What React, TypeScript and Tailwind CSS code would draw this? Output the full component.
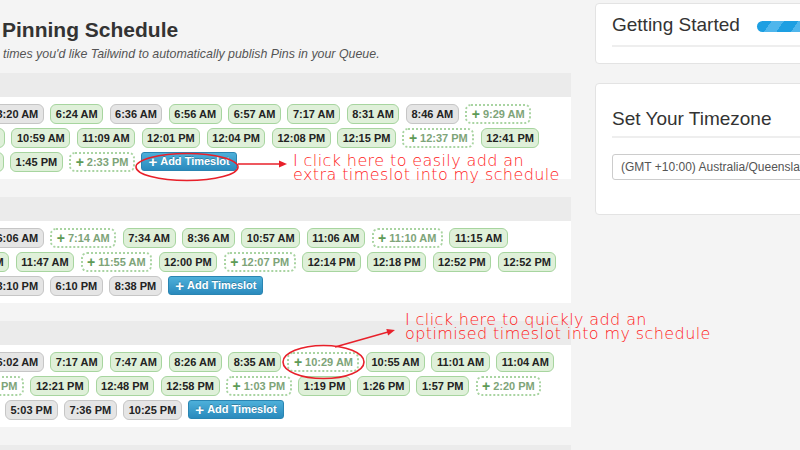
type Kind = "g" | "s" | "d" | "add";
type Row = { lead: string; slots: [string, Kind][] };

const sections: Row[][] = [
  [
    {
      lead: "-ml-[9px]",
      slots: [
        ["3:20 AM", "s"], ["6:24 AM", "g"], ["6:36 AM", "s"], ["6:56 AM", "g"], ["6:57 AM", "g"],
        ["7:17 AM", "g"], ["8:31 AM", "g"], ["8:46 AM", "s"], ["9:29 AM", "d"],
      ],
    },
    {
      lead: "-ml-[54px]",
      slots: [
        ["10:14 AM", "g"], ["10:59 AM", "g"], ["11:09 AM", "g"], ["12:01 PM", "g"], ["12:04 PM", "g"],
        ["12:08 PM", "g"], ["12:15 PM", "g"], ["12:37 PM", "d"], ["12:41 PM", "g"],
      ],
    },
    {
      lead: "-ml-[49px]",
      slots: [["1:30 PM", "g"], ["1:45 PM", "g"], ["2:33 PM", "d"], ["", "add"]],
    },
  ],
  [
    {
      lead: "-ml-[9px]",
      slots: [
        ["6:06 AM", "s"], ["7:14 AM", "d"], ["7:34 AM", "g"], ["8:36 AM", "g"], ["10:57 AM", "g"],
        ["11:06 AM", "g"], ["11:10 AM", "d"], ["11:15 AM", "g"],
      ],
    },
    {
      lead: "-ml-[49px]",
      slots: [
        ["11:40 AM", "g"], ["11:47 AM", "g"], ["11:55 AM", "d"], ["12:00 PM", "g"], ["12:07 PM", "d"],
        ["12:14 PM", "g"], ["12:18 PM", "g"], ["12:52 PM", "g"], ["12:52 PM", "g"],
      ],
    },
    {
      lead: "-ml-[9px]",
      slots: [["3:10 PM", "s"], ["6:10 PM", "s"], ["8:38 PM", "s"], ["", "add"]],
    },
  ],
  [
    {
      lead: "-ml-[9px]",
      slots: [
        ["6:02 AM", "s"], ["7:17 AM", "g"], ["7:47 AM", "g"], ["8:26 AM", "g"], ["8:35 AM", "g"],
        ["10:29 AM", "d"], ["10:55 AM", "g"], ["11:01 AM", "g"], ["11:04 AM", "g"],
      ],
    },
    {
      lead: "-ml-[48px]",
      slots: [
        ["12:14 PM", "d"], ["12:21 PM", "g"], ["12:48 PM", "g"], ["12:58 PM", "g"], ["1:03 PM", "d"],
        ["1:19 PM", "g"], ["1:26 PM", "g"], ["1:57 PM", "g"], ["2:20 PM", "d"],
      ],
    },
    {
      lead: "ml-[5px]",
      slots: [["5:03 PM", "s"], ["7:36 PM", "s"], ["10:25 PM", "s"], ["", "add"]],
    },
  ],
];

function Slot({ time, kind, extra }: { time: string; kind: Kind; extra: string }) {
  if (kind === "add") {
    return (
      <button
        className={`h-[19px] shrink-0 flex items-center gap-[3px] px-[6px] rounded-[3px] border border-[#2a85b2] bg-gradient-to-b from-[#4db0da] to-[#2a8abd] text-white text-[11px] font-bold leading-none [text-shadow:0_-1px_0_rgba(0,0,0,0.25)] ${extra}`}
      >
        <span className="text-[15px] leading-none -mt-[1px]">+</span>
        Add Timeslot
      </button>
    );
  }
  if (kind === "d") {
    return (
      <span
        className={`h-[20px] shrink-0 flex items-center gap-[3px] px-[4.5px] rounded-[6px] border-2 border-dotted border-[#a9d4a2] bg-white text-[11px] font-bold leading-none text-[#7ea479] whitespace-nowrap ${extra}`}
      >
        <span className="text-[14px] leading-none text-[#5e9b57] -mt-[1px]">+</span>
        {time}
      </span>
    );
  }
  const tone =
    kind === "g"
      ? "bg-[#dff0d9] border-[#a7d59f]"
      : "bg-[#e5e5e5] border-[#c6c6c6]";
  return (
    <span
      className={`h-[20px] shrink-0 flex items-center px-[4.5px] rounded-[6px] border ${tone} text-[11px] font-bold leading-none text-[#222] whitespace-nowrap ${extra}`}
    >
      {time}
    </span>
  );
}

function Section({ rows }: { rows: Row[] }) {
  return (
    <div>
      <div className="h-[24px] bg-[#ebebeb]" />
      <div className="bg-white pt-[7px] pb-[7px] flex flex-col gap-[4px] overflow-hidden">
        {rows.map((row, ri) => (
          <div key={ri} className="flex gap-[6.5px]">
            {row.slots.map(([t, k], i) => (
              <Slot key={i} time={t} kind={k} extra={i === 0 ? row.lead : ""} />
            ))}
          </div>
        ))}
      </div>
    </div>
  );
}

export default function App() {
  return (
    <div className="relative w-[800px] h-[450px] overflow-hidden bg-[#f4f4f4] font-['Liberation_Sans',Arial,sans-serif]">
      <div className="flex gap-[24px]">
        {/* schedule column */}
        <div className="w-[571px] shrink-0 pt-[17px]">
          <h1 className="pl-[2px] text-[21px] leading-[26px] font-bold text-[#333]">Pinning Schedule</h1>
          <p className="pl-[3px] mt-[3px] text-[12.4px] leading-[16px] italic text-[#555]">
            times you'd like Tailwind to automatically publish Pins in your Queue.
          </p>
          <div className="mt-[11px] flex flex-col gap-[18px]">
            {sections.map((rows, i) => (
              <Section key={i} rows={rows} />
            ))}
            <div className="h-[24px] bg-[#ebebeb]" />
          </div>
        </div>

        {/* sidebar */}
        <div className="pt-[3px] flex flex-col gap-[19px]">
          <div className="w-[300px] bg-white border border-[#e3e3e3] rounded-[4px] pl-[16px] pt-[9px] pb-[16px]">
            <div className="flex items-center whitespace-nowrap">
              <span className="text-[19px] leading-[24px] text-[#333]">Getting Started</span>
              <div className="ml-[17px] mt-[3px] w-[120px] h-[11px] rounded-full bg-[repeating-linear-gradient(125deg,#1d9fe2_0px,#1d9fe2_12px,#4fb6ec_12px,#4fb6ec_22px)]" />
            </div>
            <div className="mt-[8px] h-[2px] bg-[#eeeeee]" />
          </div>
          <div className="w-[300px] bg-white border border-[#e3e3e3] rounded-[4px] pl-[16px] pt-[23px] pb-[34px]">
            <div className="text-[19px] leading-[24px] text-[#333] whitespace-nowrap">Set Your Timezone</div>
            <div className="mt-[5px] h-[2px] bg-[#eeeeee]" />
            <div className="mt-[16px] h-[26px] flex items-center pl-[8px] border border-[#cccccc] rounded-[3px] text-[12px] text-[#555] whitespace-nowrap overflow-hidden">
              (GMT +10:00) Australia/Queensland
            </div>
          </div>
        </div>
      </div>

      {/* annotations */}
      <svg className="absolute inset-0 pointer-events-none" width="800" height="450" viewBox="0 0 800 450">
        <ellipse cx="187" cy="167" rx="51" ry="13.5" fill="none" stroke="#e8202a" strokeWidth="1.6" />
        <line x1="238" y1="164" x2="280" y2="164" stroke="#e8202a" strokeWidth="1.4" />
        <polygon points="287,164 279,160.5 279,167.5" fill="#e8202a" />
        <ellipse cx="323.5" cy="362" rx="40.5" ry="16.5" fill="none" stroke="#e8202a" strokeWidth="1.6" />
        <line x1="335" y1="347" x2="388" y2="332" stroke="#e8202a" strokeWidth="1.4" />
        <polygon points="395,330 388.1,335.6 386.3,329" fill="#e8202a" />
      </svg>
      <div className="absolute left-[293px] top-[153.5px] text-[16px] leading-[14.5px] tracking-[0.4px] font-extralight text-[#ff1a1a] font-['DejaVu_Sans',sans-serif] whitespace-nowrap">
        <div>I click here to easily add an</div>
        <div>extra timeslot into my schedule</div>
      </div>
      <div className="absolute left-[405px] top-[312.5px] text-[16px] leading-[14.5px] tracking-[0.4px] font-extralight text-[#ff1a1a] font-['DejaVu_Sans',sans-serif] whitespace-nowrap">
        <div>I click here to quickly add an</div>
        <div>optimised timeslot into my schedule</div>
      </div>
    </div>
  );
}
